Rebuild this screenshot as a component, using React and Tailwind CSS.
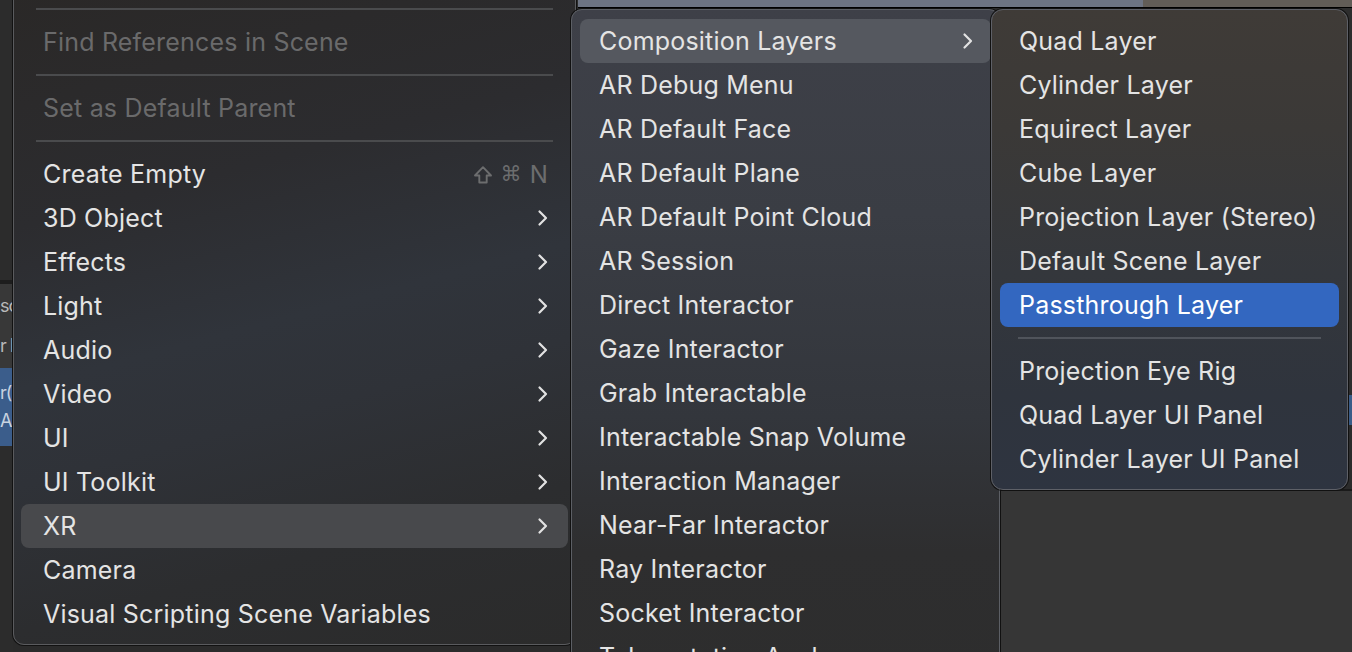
import React from 'react';

const Chevron = () => (
    <svg width="11" height="18" viewBox="0 0 11 18" className="text-[#e2e2e2]">
        <path d="M2.5 2.5l6.5 6.5-6.5 6.5" fill="none" stroke="currentColor" strokeWidth="2.2" strokeLinecap="round" strokeLinejoin="round" />
    </svg>
);

const ShiftIcon = () => (
    <svg width="20" height="20" viewBox="0 0 20 20">
        <path d="M10 2.2L18 10.5h-4.3v7H6.3v-7H2z" fill="none" stroke="currentColor" strokeWidth="1.9" strokeLinejoin="round" />
    </svg>
);

const Separator = ({ inset = 'px-[15px]', color = 'bg-[#4a4b4d]' }) => (
    <div className={`h-[22px] flex items-center ${inset}`}>
        <div className={`h-[2px] w-full ${color}`}></div>
    </div>
);

const Row = ({ label, sub, disabled, active, shortcut, pad = 'pl-[22px] pr-[20px]', activeBg = 'bg-[#48494c]', textColor }) => (
    <div className={`h-[44px] flex items-center justify-between rounded-[8px] ${pad} ${active ? activeBg : ''}`}>
        <span className={`whitespace-nowrap pt-[2px] ${disabled ? 'text-[#6a6a6b]' : textColor || 'text-[#e4e4e4]'}`}>{label}</span>
        {sub && <Chevron />}
        {shortcut && (
            <span className="flex items-center gap-[8px] text-[#6c6d6e] text-[24px] pt-[2px]">
                <ShiftIcon />
                <span className="font-['DejaVu_Sans',sans-serif] text-[21px]">⌘</span>
                <span>N</span>
            </span>
        )}
    </div>
);

const leftItems = [
    { label: '3D Object', sub: true },
    { label: 'Effects', sub: true },
    { label: 'Light', sub: true },
    { label: 'Audio', sub: true },
    { label: 'Video', sub: true },
    { label: 'UI', sub: true },
    { label: 'UI Toolkit', sub: true },
    { label: 'XR', sub: true, active: true },
    { label: 'Camera' },
    { label: 'Visual Scripting Scene Variables' },
];

const xrItems = [
    'AR Debug Menu', 'AR Default Face', 'AR Default Plane', 'AR Default Point Cloud', 'AR Session',
    'Direct Interactor', 'Gaze Interactor', 'Grab Interactable', 'Interactable Snap Volume',
    'Interaction Manager', 'Near-Far Interactor', 'Ray Interactor', 'Socket Interactor', 'Teleportation Anchor',
];

const layerItems = ['Quad Layer', 'Cylinder Layer', 'Equirect Layer', 'Cube Layer', 'Projection Layer (Stereo)', 'Default Scene Layer'];
const panelItems = ['Projection Eye Rig', 'Quad Layer UI Panel', 'Cylinder Layer UI Panel'];

const App = () => {
    return (
        <div className="relative w-[1352px] h-[652px] overflow-hidden bg-[#2b2b2b] font-['Inter','Noto_Sans',sans-serif] text-[25px] tracking-[0.2px]">
            {/* background windows */}
            <div className="flex flex-col h-full">
                <div className="flex h-[8px]">
                    <div className="w-[578px] bg-[#2c2c2c]"></div>
                    <div className="w-[565px] bg-[#6d7483] border-b border-black"></div>
                    <div className="flex-1 bg-[#625d57] border-b border-black"></div>
                </div>
                <div className="flex flex-1">
                    <div className="w-[13px] flex flex-col text-[18px] tracking-[-1px] text-[#b9b9b9] overflow-hidden">
                        <div className="h-[272px] bg-[#2c2c2c]"></div>
                        <div className="h-[4px] bg-[#1d1d1d]"></div>
                        <div className="h-[84px] bg-[#383838] flex flex-col justify-center gap-[18px] whitespace-nowrap">
                            <span className="leading-[22px]">sc</span>
                            <span className="leading-[22px]">r I</span>
                        </div>
                        <div className="h-[78px] bg-[#3b5d8b] flex flex-col justify-center gap-[6px] whitespace-nowrap text-[#c9d3e0]">
                            <span className="leading-[22px]">r(</span>
                            <span className="leading-[22px]">Ap</span>
                        </div>
                        <div className="flex-1 bg-[#2c2c2c]"></div>
                    </div>
                    <div className="flex-1 bg-[#2b2b2b]"></div>
                    <div className="w-[354px] flex flex-col">
                        <div className="h-[387px] bg-[#2d2d2d]"></div>
                        <div className="h-[30px] bg-[#3a5c88]"></div>
                        <div className="h-[64px] bg-[#2b2b2b]"></div>
                        <div className="flex-1 bg-[#363636] border-l-2 border-t-2 border-[#1a1a1a]"></div>
                    </div>
                </div>
            </div>

            {/* GameObject menu */}
            <div className="absolute left-[13px] top-[-14px] w-[563px] h-[659px] rounded-[11px] border border-[#5a5b5e] shadow-[0_0_0_1px_#121212] bg-[linear-gradient(165deg,#2a2827_0%,#2c2c2f_30%,#30343b_50%,#2f3238_62%,#2c2d2f_80%,#2b2b2b_100%)] pt-[11px] px-[7px] pb-[10px]">
                <Separator />
                <Row label="Find References in Scene" disabled />
                <Separator />
                <Row label="Set as Default Parent" disabled />
                <Separator />
                <Row label="Create Empty" shortcut />
                {leftItems.map(item => (
                    <Row key={item.label} {...item} />
                ))}
            </div>

            {/* XR submenu */}
            <div className="absolute left-[571px] top-[9px] w-[429px] h-[680px] rounded-[11px] border border-[#5c5f65] shadow-[0_0_0_1px_#111] bg-[linear-gradient(180deg,#3e4048_0%,#3a3d44_30%,#33363c_60%,#2e2e2f_80%,#2d2d2d_100%)] pt-[9px] px-[8px]">
                <Row label="Composition Layers" sub active pad="pl-[19px] pr-[18px]" activeBg="bg-[#55585f]" />
                {xrItems.map(label => (
                    <Row key={label} label={label} pad="pl-[19px] pr-[18px]" />
                ))}
            </div>

            {/* Composition Layers submenu */}
            <div className="absolute left-[991px] top-[9px] w-[357px] h-[481px] rounded-[12px] border border-[#5e6067] shadow-[0_0_0_1px_#111] bg-[linear-gradient(180deg,#3f3b37_0%,#3b3937_25%,#34373c_55%,#2f343d_80%,#2e3440_100%)] pt-[9px] px-[8px] pb-[7px]">
                {layerItems.map(label => (
                    <Row key={label} label={label} pad="pl-[19px] pr-[18px]" />
                ))}
                <Row label="Passthrough Layer" active pad="pl-[19px] pr-[18px]" activeBg="bg-[#3367c0]" textColor="text-white" />
                <Separator inset="px-[18px]" color="bg-[#50545b]" />
                {panelItems.map(label => (
                    <Row key={label} label={label} pad="pl-[19px] pr-[18px]" />
                ))}
            </div>
        </div>
    );
};

export default App;
